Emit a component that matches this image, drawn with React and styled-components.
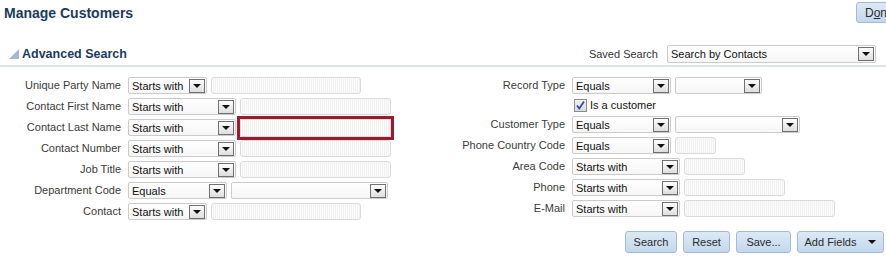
import styled, { createGlobalStyle } from 'styled-components'

const GlobalStyle = createGlobalStyle`
	html, body {
		margin: 0;
		padding: 0;
		background: #fff;
		overflow: hidden;
	}
	body {
		font-family: 'Liberation Sans', Arial, sans-serif;
		font-size: 11px;
		color: #333;
	}
`

const Page = styled.div`
	width: 886px;
	height: 259px;
`

const Header = styled.div`
	display: flex;
	justify-content: space-between;
	align-items: flex-start;
	height: 24px;
`

const Title = styled.h1`
	margin: 0;
	padding: 5px 0 0 4px;
	font-size: 14px;
	font-weight: bold;
	color: #1a3b5e;
`

const Button = styled.button`
	display: inline-flex;
	align-items: center;
	justify-content: center;
	gap: 12px;
	box-sizing: border-box;
	height: 22px;
	width: ${(p) => p.$w}px;
	padding: 0 4px;
	border: 1px solid #a3bad2;
	border-radius: 3px;
	background: linear-gradient(#dde9f5, #c3d8ee);
	font-family: 'Liberation Sans', Arial, sans-serif;
	font-size: 11px;
	color: #2a2a2a;
	white-space: nowrap;
	cursor: pointer;
`

const DoneButton = styled(Button)`
	margin-top: 2px;
	margin-right: -12px;
	height: 21px;
	justify-content: flex-start;
	padding-left: 8px;
	font-size: 12px;
`

const SectionHead = styled.div`
	display: flex;
	align-items: center;
	height: 22px;
	margin-top: 19px;
	padding: 0 10px 0 9px;
	border-bottom: 2px solid #dde3e8;
`

const SectionTitle = styled.h2`
	margin: 0 0 0 3px;
	font-size: 12.5px;
	font-weight: bold;
	color: #1a3b5e;
	flex: 1;
`

const SavedLabel = styled.span`
	margin-right: 9px;
	color: #333;
`

const Form = styled.div`
	display: flex;
	padding-top: 8px;
`

const Column = styled.div`
	display: grid;
	grid-template-columns: ${(p) => p.$label}px auto;
	column-gap: 7px;
	align-content: start;
	width: ${(p) => p.$w}px;
`

const Label = styled.span`
	text-align: right;
	white-space: nowrap;
	color: #3a3a3a;
	height: ${(p) => p.$h || 21}px;
	line-height: ${(p) => p.$h || 21}px;
`

const Fields = styled.div`
	display: flex;
	align-items: center;
	gap: 4px;
	height: ${(p) => p.$h || 21}px;
`

const SelectBox = styled.div`
	display: flex;
	align-items: center;
	box-sizing: border-box;
	width: ${(p) => p.$w}px;
	height: ${(p) => p.$h || 17}px;
	padding: 0 1px 0 3px;
	border: 1px solid #cbcbcb;
	border-radius: 2px;
	background: linear-gradient(#fff, #f6f6f6);
	color: #111;
	white-space: nowrap;

	& span {
		flex: 1;
	}
`

const DropButton = styled.div`
	display: flex;
	align-items: flex-end;
	justify-content: center;
	box-sizing: border-box;
	width: 16px;
	height: 14px;
	padding-bottom: 3px;
	border: 1px solid #707070;
	background: linear-gradient(#fdfdfd, #dedede);
`

const TextInput = styled.div`
	box-sizing: border-box;
	width: ${(p) => p.$w}px;
	height: ${(p) => (p.$focus ? 18 : 17)}px;
	border: 1px solid #dadada;
	border-radius: ${(p) => (p.$focus ? 0 : 3)}px;
	background: repeating-linear-gradient(90deg, #fbfbfb 0 1px, #f1f1f1 1px 2px);
	box-shadow: ${(p) => (p.$focus ? '0 0 0 3px #9a1b30' : 'none')};
`

const CheckRow = styled.label`
	display: flex;
	align-items: center;
	gap: 3px;
	color: #111;
	padding-left: 2px;
`

const Actions = styled.div`
	display: flex;
	justify-content: flex-end;
	gap: 6px;
	margin-top: 9px;
	padding-right: 2px;
`

const Caret = () => (
	<svg width='8' height='5' viewBox='0 0 8 5'>
		<polygon points='0,0 8,0 4,4' fill='#111' />
	</svg>
)

const Select = ({ w, h, value }) => (
	<SelectBox $w={w} $h={h}>
		<span>{value}</span>
		<DropButton>
			<Caret />
		</DropButton>
	</SelectBox>
)

const CheckIcon = () => (
	<svg width='13' height='13' viewBox='0 0 13 13'>
		<defs>
			<linearGradient id='cb' x1='0' y1='0' x2='0' y2='1'>
				<stop offset='0' stopColor='#f4f4f4' />
				<stop offset='1' stopColor='#d8d8d8' />
			</linearGradient>
		</defs>
		<rect x='0.5' y='0.5' width='12' height='12' fill='url(#cb)' stroke='#8a8c8e' />
		<path d='M3 6.5 L5.3 9.5 L10 2.5' fill='none' stroke='#2f4fa8' strokeWidth='1.8' />
	</svg>
)

const leftRows = [
	{ label: 'Unique Party Name', sel: 'Starts with', sw: 79, input: 150 },
	{ label: 'Contact First Name', sel: 'Starts with', sw: 108, input: 151 },
	{ label: 'Contact Last Name', sel: 'Starts with', sw: 108, input: 151, focus: true },
	{ label: 'Contact Number', sel: 'Starts with', sw: 108, input: 151 },
	{ label: 'Job Title', sel: 'Starts with', sw: 108, input: 151 },
	{ label: 'Department Code', sel: 'Equals', sw: 99, select2: 157 },
	{ label: 'Contact', sel: 'Starts with', sw: 79, input: 150 },
]

const rightRows = [
	{ label: 'Record Type', sel: 'Equals', sw: 99, select2: 87 },
	{ check: true },
	{ label: 'Customer Type', sel: 'Equals', sw: 99, select2: 125 },
	{ label: 'Phone Country Code', sel: 'Equals', sw: 99, input: 41 },
	{ label: 'Area Code', sel: 'Starts with', sw: 108, input: 61 },
	{ label: 'Phone', sel: 'Starts with', sw: 108, input: 101 },
	{ label: 'E-Mail', sel: 'Starts with', sw: 108, input: 151 },
]

const renderRow = (row, i) => {
	if (row.check) {
		return [
			<Label key={'l' + i} $h={18} />,
			<Fields key={'f' + i} $h={18}>
				<CheckRow>
					<CheckIcon />
					Is a customer
				</CheckRow>
			</Fields>,
		]
	}
	return [
		<Label key={'l' + i}>{row.label}</Label>,
		<Fields key={'f' + i}>
			<Select w={row.sw} value={row.sel} />
			{row.input && <TextInput $w={row.input} $focus={row.focus} />}
			{row.select2 && <Select w={row.select2} value='' />}
		</Fields>,
	]
}

export default function App() {
	return (
		<Page>
			<GlobalStyle />
			<Header>
				<Title>Manage Customers</Title>
				<DoneButton $w={42}>
					<span>
						D<u>o</u>ne
					</span>
				</DoneButton>
			</Header>
			<SectionHead>
				<svg width='10' height='10' viewBox='0 0 10 10'>
					<polygon points='10,0 10,10 0,10' fill='#a9b9c9' />
				</svg>
				<SectionTitle>Advanced Search</SectionTitle>
				<SavedLabel>Saved Search</SavedLabel>
				<Select w={209} h={18} value='Search by Contacts' />
			</SectionHead>
			<Form>
				<Column $w={450} $label={121}>
					{leftRows.map(renderRow)}
				</Column>
				<Column $w={436} $label={115}>
					{rightRows.map(renderRow)}
				</Column>
			</Form>
			<Actions>
				<Button $w={52}>Search</Button>
				<Button $w={47}>Reset</Button>
				<Button $w={55}>Save...</Button>
				<Button $w={87}>
					<span>Add Fields</span>
					<Caret />
				</Button>
			</Actions>
		</Page>
	)
}
